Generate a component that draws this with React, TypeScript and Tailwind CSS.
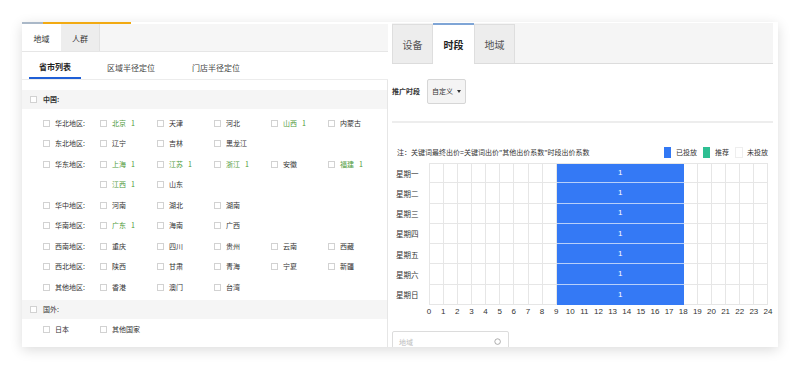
import React from "react";

type Item = [string, number?];

const regions: { name: string; items: Item[] }[] = [
  { name: "华北地区", items: [["北京", 1], ["天津"], ["河北"], ["山西", 1], ["内蒙古"]] },
  { name: "东北地区", items: [["辽宁"], ["吉林"], ["黑龙江"]] },
  { name: "华东地区", items: [["上海", 1], ["江苏", 1], ["浙江", 1], ["安徽"], ["福建", 1]] },
  { name: "", items: [["江西", 1], ["山东"]] },
  { name: "华中地区", items: [["河南"], ["湖北"], ["湖南"]] },
  { name: "华南地区", items: [["广东", 1], ["海南"], ["广西"]] },
  { name: "西南地区", items: [["重庆"], ["四川"], ["贵州"], ["云南"], ["西藏"]] },
  { name: "西北地区", items: [["陕西"], ["甘肃"], ["青海"], ["宁夏"], ["新疆"]] },
  { name: "其他地区", items: [["香港"], ["澳门"], ["台湾"]] },
];

const days = ["星期一", "星期二", "星期三", "星期四", "星期五", "星期六", "星期日"];

function Box() {
  return <span className="inline-block w-[7px] h-[7px] border border-[#d2d2d2] bg-white shrink-0" />;
}

function Cell({ label, count }: { label: string; count?: number }) {
  return (
    <div className="w-[57px] shrink-0 flex items-center gap-[5px]">
      <Box />
      <span className={count ? "text-[#4f9a3a]" : "text-[#333]"}>
        {label}
        {count ? <span className="ml-[5px]">{count}</span> : null}
      </span>
    </div>
  );
}

export default function App() {
  return (
    <div className="w-[800px] h-[368px] bg-white pt-[22px] pl-[22px] font-['Noto_Sans_CJK_SC','Noto_Sans',sans-serif] overflow-hidden">
      <div className="flex w-[756px] h-[325px] bg-white shadow-[0_3px_12px_rgba(0,0,0,0.14)]">
        {/* left panel */}
        <div className="w-[366px] flex flex-col">
          <div className="flex h-[2px] shrink-0">
            <div className="w-[21px] bg-[#aab8c8]" />
            <div className="w-[88px] bg-[#f2aa12]" />
          </div>
          <div className="flex h-[28px] shrink-0 bg-[#f6f6f6] border-b border-[#e6e6e6] text-[8px] text-[#333]">
            <div className="w-[39px] bg-white flex items-center justify-center pt-[3px]">地域</div>
            <div className="w-[39px] bg-[#ededed] border-r border-[#e2e2e2] flex items-center justify-center pt-[3px]">人群</div>
          </div>
          <div className="flex h-[28px] shrink-0 border-b border-[#ececec] text-[8px] text-[#444] pl-[7px]">
            <div className="w-[52px] flex items-center justify-center border-b-2 border-[#1f5fd6] font-bold text-[#222] pt-[4px]">省市列表</div>
            <div className="w-[60px] ml-[20px] flex items-center justify-center pt-[4px]">区域半径定位</div>
            <div className="w-[60px] ml-[25px] flex items-center justify-center pt-[4px]">门店半径定位</div>
          </div>
          <div className="flex-1 min-h-0 border-r border-[#e6e6e6] pt-[10px] text-[7px] leading-none">
            <div className="h-[19px] bg-[#f5f5f5] flex items-center pl-[8px] gap-[6px]">
              <Box />
              <span className="font-bold text-[#333]">中国:</span>
            </div>
            <div className="pt-[4px] pl-[21px]">
              {regions.map((r, i) => (
                <div key={i} className="h-[20.5px] flex items-center">
                  {r.name ? (
                    <div className="w-[57px] shrink-0 flex items-center gap-[5px]">
                      <Box />
                      <span className="text-[#333]">{r.name}:</span>
                    </div>
                  ) : (
                    <div className="w-[57px] shrink-0" />
                  )}
                  {r.items.map(([n, c]) => (
                    <Cell key={n} label={n} count={c} />
                  ))}
                </div>
              ))}
            </div>
            <div className="mt-[2px] h-[19px] bg-[#f5f5f5] flex items-center pl-[8px] gap-[6px]">
              <Box />
              <span className="text-[#333]">国外:</span>
            </div>
            <div className="h-[22px] flex items-center pl-[21px]">
              <Cell label="日本" />
              <Cell label="其他国家" />
            </div>
          </div>
        </div>

        {/* right panel */}
        <div className="w-[390px] h-[325px] pl-[4px] pr-[5px] pt-[1px] overflow-hidden">
          <div className="flex h-[41px] bg-[#f5f5f5] border-b border-[#dcdcdc] text-[10px]">
            <div className="w-[41px] mt-[1px] bg-[#ededed] border border-b-0 border-[#dedede] flex items-center justify-center text-[#555]">设备</div>
            <div className="w-[41px] bg-white border-t-2 border-[#7fa5d6] -mb-[1px] flex items-center justify-center font-bold text-[#222]">时段</div>
            <div className="w-[41px] mt-[1px] bg-[#ededed] border border-b-0 border-[#dedede] flex items-center justify-center text-[#555]">地域</div>
          </div>

          <div className="mt-[15px] h-[25px] flex items-center text-[7px]">
            <span className="w-[35px] font-bold text-[#333]">推广时段</span>
            <div className="h-[25px] w-[39px] bg-[#f4f4f4] border border-[#d6d6d6] rounded-[2px] flex items-center justify-center gap-[4px] text-[#333]">
              自定义
              <span className="inline-block w-0 h-0 border-l-[2px] border-r-[2px] border-t-[3px] border-l-transparent border-r-transparent border-t-[#333]" />
            </div>
          </div>

          <div className="mt-[17px] h-[2px] bg-[#ededed]" />

          <div className="mt-[23px] h-[12px] flex items-center text-[7px] text-[#333] pl-[5px] pr-[5px]">
            <span className="flex-1">注：关键词最终出价=关键词出价"其他出价系数"时段出价系数</span>
            <span className="w-[7px] h-[11px] bg-[#3278f4]" />
            <span className="ml-[5px]">已投放</span>
            <span className="ml-[6px] w-[7px] h-[11px] bg-[#2ebf93]" />
            <span className="ml-[5px]">推荐</span>
            <span className="ml-[6px] w-[8px] h-[11px] bg-white border border-[#eee]" />
            <span className="ml-[4px]">未投放</span>
          </div>

          <div className="mt-[5px]">
            {days.map((d, i) => (
              <div key={d} className="flex h-[20.3px]">
                <div className="w-[37px] pl-[4px] flex items-center text-[7.5px] text-[#333]">{d}</div>
                <div className={`w-[339px] grid grid-cols-[repeat(24,minmax(0,1fr))] border-l border-[#e6e6e6] ${i === 0 ? "border-t" : ""}`}>
                  {Array.from({ length: 9 }).map((_, k) => (
                    <div key={k} className="border-r border-b border-[#e6e6e6]" />
                  ))}
                  <div className={`col-span-9 bg-[#3479f5] flex items-center justify-center text-white text-[8px] font-['Liberation_Sans',sans-serif] ${i < 6 ? "border-b border-[#b7cffa]" : ""}`}>
                    1
                  </div>
                  {Array.from({ length: 6 }).map((_, k) => (
                    <div key={k} className="border-r border-b border-[#e6e6e6]" />
                  ))}
                </div>
              </div>
            ))}
            <div className="flex h-[14px] items-center">
              <div className="w-[37px]" />
              <div className="w-[339px] flex justify-between text-[8px] text-[#333] font-['Liberation_Sans',sans-serif]">
                {Array.from({ length: 25 }).map((_, k) => (
                  <span key={k} className="w-0 flex justify-center">{k}</span>
                ))}
              </div>
            </div>
          </div>

          <div className="mt-[12px] w-[117px] h-[22px] border border-[#dcdcdc] rounded-[2px] flex items-start pt-[5px] px-[6px] justify-between text-[7px] text-[#bbb]">
            <span>地域</span>
            <svg width="8" height="8" viewBox="0 0 10 10" className="mt-[1px]">
              <circle cx="4.5" cy="4.5" r="3.5" fill="none" stroke="#999" strokeWidth="1" />
            </svg>
          </div>
        </div>
      </div>
    </div>
  );
}
